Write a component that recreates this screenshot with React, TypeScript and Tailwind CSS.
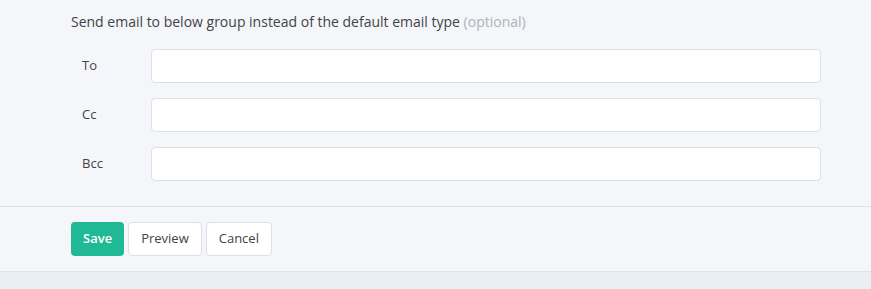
import React from 'react';

const font = { fontFamily: '"Open Sans", "Noto Sans", sans-serif' };

function Field({ label }: { label: string }) {
  return (
    <div className="flex items-center">
      <label className="w-[80px] shrink-0 pl-[11px] text-[13px] text-[#3f4348]">{label}</label>
      <input
        type="text"
        className="h-[34px] w-[670px] shrink-0 rounded-[4px] border border-[#dde1e6] bg-white px-3 text-[13px] outline-none"
      />
    </div>
  );
}

export default function App() {
  return (
    <div className="h-[289px] w-[871px] bg-[#f4f6f9]" style={font}>
      <div className="pl-[71px] pt-[12px] pb-[25px]">
        <p className="text-[14px] leading-[20px] text-[#3f4348]">
          Send email to below group instead of the default email type{' '}
          <span className="text-[#adb3ba]">(optional)</span>
        </p>
        <div className="mt-[17px] flex flex-col gap-[15px]">
          <Field label="To" />
          <Field label="Cc" />
          <Field label="Bcc" />
        </div>
      </div>
      <div className="flex h-[65px] items-center gap-[4px] border-t border-[#dde2e8] px-[71px]">
        <button className="h-[34px] rounded-[4px] bg-[#1fb996] px-[12px] text-[13px] font-semibold text-white">
          Save
        </button>
        <button className="h-[34px] rounded-[4px] border border-[#dde1e6] bg-white px-[12px] text-[13px] text-[#3f4348]">
          Preview
        </button>
        <button className="h-[34px] rounded-[4px] border border-[#dde1e6] bg-white px-[12px] text-[13px] text-[#3f4348]">
          Cancel
        </button>
      </div>
      <div className="h-[18px] border-t border-[#dde2e8] bg-[#e9eef3]" />
    </div>
  );
}
